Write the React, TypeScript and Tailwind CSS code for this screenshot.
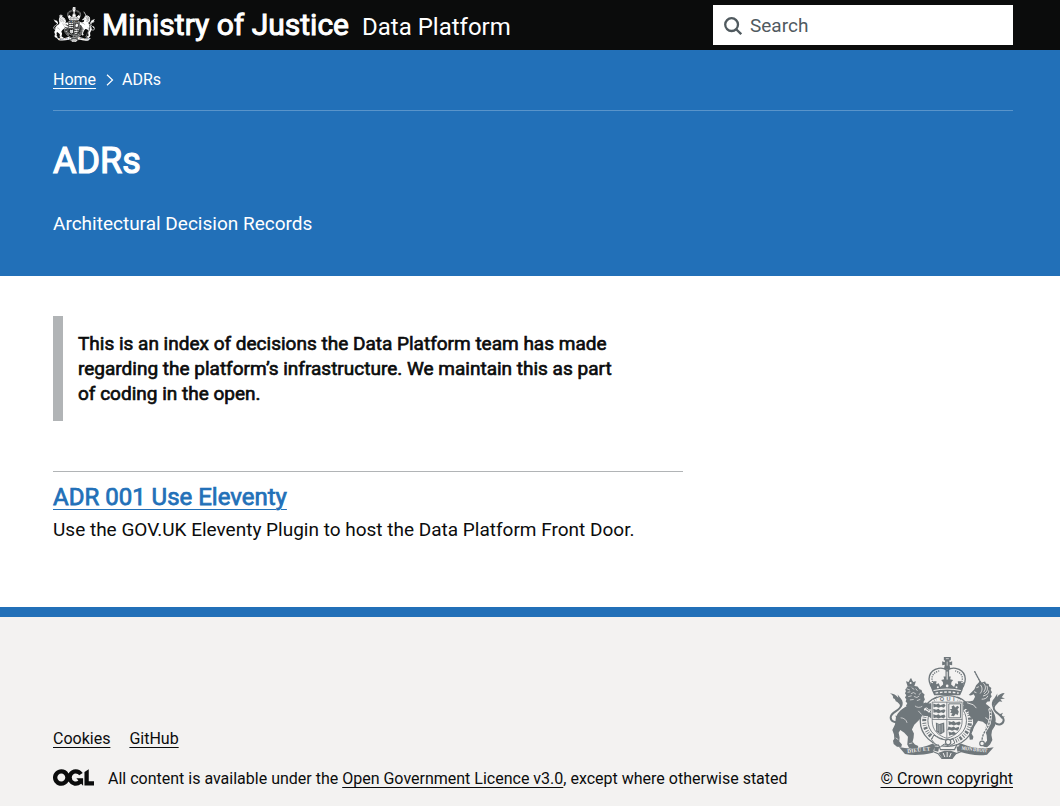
import React from "react";

type CrestProps = { className: string; ink: string; ground: string };

function Lion({ ink, ground }: { ink: string; ground: string }) {
  return (
    <g strokeLinecap="round" strokeLinejoin="round">
      {/* tail */}
      <path fill="none" stroke={ink} strokeWidth="6" d="M60 214c-14 6-28 0-28-12 0-18 30-20 31-36 1-9-12-12-16-21" />
      <path fill={ink} d="M30 129c10 1 19 5 25 14l-2-10 9 11c8 9 8 18 3 27-4-11-10-17-18-18 1-5-3-8-8-9 2-5-1-10-9-15zM46 196l12 5-8 6z" />
      {/* crown */}
      <path fill={ink} d="M83 108l-5-15 8 2 3-6 2-4h4l1 4 4 6 8-2-5 15z" />
      <circle cx="92" cy="98" r="3" fill={ground} />
      {/* mane and head */}
      <path fill={ink} d="M83 108l21-1 9 2 6 8 6 2 2 8 7 6-2 7 3 8-4 7 1 8-8 8-12 8-25-3-9-9 4-8-5-5 2-7-4-5 4-7-4-6 3-6-2-5z" />
      {/* body, arms and hind legs */}
      <path fill={ink} d="M88 155c13-5 29-2 39 7l9-5 14 3 9 8-3 9-9 1-6-6-11 2 5 10 14 4 13-1 8 8-3 8-13 2-8-7-19-2-8 12-16 16-7 14 6 12-1 13-3 12 7 8 10 5-2 9-12 1-14-5-5-10 2-23-11-12-12-8-5 8 3 14-1 12 8 9-2 8-13-1-10-8-2-10 4-6-1-13-5-13 8-17 2-15c1-16 16-31 36-41z" />
      <path fill="none" stroke={ground} strokeWidth="2" d="M81 116l8 3M96 113l6 4M108 116l4 5M84 126l6-1M94 130l7-3 6 4M86 139l8-2M103 139l8 3 6-4M91 149l9-1M112 151l8-3M122 128l-4 5M106 168c6 5 14 5 20 1M116 183l8 9M63 203c9 0 16 6 18 14M48 264l6 4M88 281l8-2" />
    </g>
  );
}

function Unicorn({ ink, ground }: { ink: string; ground: string }) {
  return (
    <g strokeLinecap="round" strokeLinejoin="round">
      {/* horn */}
      <path stroke={ink} strokeWidth="4" strokeDasharray="4 4" d="M285 64l17 32" />
      <path stroke={ink} strokeWidth="2" d="M285 64l17 32" />
      {/* tail */}
      <path fill="none" stroke={ink} strokeWidth="6" d="M345 218c12 10 26 4 27-7 1-17-30-20-30-38 0-10 9-14 17-23" />
      <path fill={ink} d="M375 128c-10 0-19 5-23 13l1-11-9 14c-8 8-10 18-5 28 3-10 9-16 17-19l12 2-6-8 14-2-10-4zM356 194l14-6-6 11 12 0-10 7z" />
      {/* head and mane */}
      <path fill={ink} d="M276 125l8-8 5-12 8-8 4-6 5 6 10-3 3 6 8 1 1 7 7 5-2 6 4 7-4 5 3 8-5 6 0 8-9 2-5 8-15 3-20-4-3-9 7-13-4-8-9 4-6-2z" />
      {/* body and legs */}
      <path fill={ink} d="M271 153c16-5 37-1 50 10 16 12 27 29 27 46l-2 18-9 14-2 14 3 15-7 13-9 9-11-2 3-9 8-9-1-16-5-17 4-15-11-9-14-3-6 9-9 14-5 15 6 10-2 8-9 1-2-13 4-21 9-15-2-12-12-14-1-14-9-4-11 9 5 9-6 7-8-12 1-11 14-12-15-3-5 5-7-4 6-9 18-1z" />
      <path fill="none" stroke={ground} strokeWidth="2.5" d="M291 112l5-2M303 105c6 8 5 16-1 24M312 100c8 8 6 18 0 25M322 108c4 10-1 17-8 22M327 122c1 9-8 13-16 15M324 138c-3 7-10 9-17 9M284 125l5 2M263 158l18 6 8 9M318 203c8 3 13 11 14 19" />
      {/* chain */}
      <path fill="none" stroke={ground} strokeWidth="8" d="M330 178c7 18 1 34-5 50-5 12-17 22-18 42" />
      <path fill="none" stroke={ink} strokeWidth="4" strokeLinecap="butt" strokeDasharray="7 3" d="M330 178c7 18 1 34-5 50-5 12-17 22-18 42" />
      <circle cx="307" cy="280" r="7" fill={ground} stroke={ink} strokeWidth="3.5" />
    </g>
  );
}

function Crest({ className, ink, ground }: CrestProps) {
  return (
    <svg viewBox="27 20 349 307" className={className} aria-hidden="true" preserveAspectRatio="none">
      {/* garter */}
      <ellipse cx="202" cy="212" rx="81" ry="77" fill={ground} stroke={ink} strokeWidth="4" />
      <ellipse cx="202" cy="212" rx="69" ry="65" fill="none" stroke={ink} strokeWidth="12" strokeDasharray="3 5 7 4 2 4" />
      <path fill={ground} d="M171 133h62v26h-62z" />
      <path fill="none" stroke={ink} strokeWidth="4" d="M160 147c26-14 58-14 84 0" />
      <ellipse cx="202" cy="212" rx="58" ry="56" fill={ground} stroke={ink} strokeWidth="3" />
      <text x="180" y="153" fill={ink} fontSize="17" fontWeight="700" fontFamily="Liberation Sans, sans-serif" textLength="44">QUI</text>
      <Lion ink={ink} ground={ground} />
      <Unicorn ink={ink} ground={ground} />
      {/* crown */}
      <path fill={ink} d="M192 20h21v10h-4v6l8-3v12l-8-2 3 14h-20l3-14-8 2V33l8 3v-6h-3z" />
      <path stroke={ground} strokeWidth="2" d="M198 25h9M202 34v12" />
      <path fill="none" stroke={ink} strokeWidth="4" d="M158 116c-19-29-11-56 18-62 10-2 18 0 26 6 8-6 16-8 26-6 29 6 37 33 18 62" />
      <path fill="none" stroke={ink} strokeWidth="4" strokeDasharray="4 3" d="M165 108c-16-22-9-41 13-46M239 108c16-22 9-41-13-46" />
      <path fill={ink} d="M197 58h11v36h-11zM156 120l-5-25 8 5 1-7h10l-1 9 8-3 4 11 9-7-1-8-5-6 9-2-2-8h22l-2 8 9 2-5 6-1 8 9 7 4-11 8 3-1-9h10l1 7 8-5-5 25-7 15h-78z" />
      <path stroke={ground} strokeWidth="3" fill="none" d="M161 121c26-6 55-6 82 0M202 64v24" />
      <path stroke={ground} strokeWidth="4" strokeDasharray="8 5" fill="none" d="M167 129c24-5 47-5 70 0" />
      <g fill={ground}>
        <circle cx="174" cy="111" r="3" />
        <circle cx="202" cy="107" r="4" />
        <circle cx="230" cy="111" r="3" />
      </g>
      {/* shield */}
      <path fill={ground} d="M154 153h96v60c0 30-19 48-49 57-29-9-47-27-47-57z" />
      <path fill="none" stroke={ink} strokeWidth="2.5" d="M157 156h90v56c0 28-17 44-46 53-27-9-44-25-44-53zM157 208h90M201 156v108" />
      <g fill={ink}>
        <path d="M160 160l9 3 7-3 5 5 12-4 4 5-5 7-8-3-8 3-7-3-8 2zM160 176l9 3 7-3 5 5 12-4 4 5-5 7-8-3-8 3-7-3-8 2zM160 192l9 3 7-3 5 5 12-4 4 5-5 7-8-3-8 3-7-3-8 2z" />
        <path d="M206 213l9 3 7-3 5 5 12-4 4 5-5 7-8-3-8 3-7-3-8 2zM206 229l9 3 7-3 5 5 10-4 1 5-5 7-8-3-8 3-7-3-8 2zM206 244l9 3 7-3 5 5 5-2-8 8-8-1-8 3z" />
        <path d="M168 217l10 5 15-5 1 29-12 7-13-9z" />
        <path d="M215 169l7-4 4 7 7-5 5 4-5 6 4 8-4 10-5-4-6 7-9-2 5-6-7-2 4-6-6-4 8-2z" />
      </g>
      <path fill="none" stroke={ink} strokeWidth="3" d="M207 161h35v42h-35z" />
      <path fill="none" stroke={ground} strokeWidth="1.5" d="M174 221v22M180 224v25M187 222v25" />
      {/* belt and motto scroll */}
      <path fill={ground} stroke={ink} strokeWidth="3" d="M162 255l18 11 22 5 18-4 5 12-17 9-15-6-12 9-16-10-10-12z" />
      <circle cx="205" cy="276" r="8" fill={ground} stroke={ink} strokeWidth="3.5" />
      <path fill={ground} stroke={ink} strokeWidth="3.5" d="M160 285h16l6 14h42l7-15h15v20l-18 7-11 14h-31l-11-14-20-8z" />
      <path fill={ink} d="M57 291c35 8 67 4 102-11l6 8-6 20c-30 7-58 9-84 4zM243 280c32 13 64 19 99 12l-20 22c-28 4-54 0-80-8l-8-14zM164 289l14 2-3 14-12-3zM230 290l13-2 3 14-13 3zM176 308l18-6h19l17 6-12 17h-30z" />
      <path fill="none" stroke={ground} strokeWidth="3" d="M190 309l5 12M202 306v15M214 309l-5 12" />
      <text x="83" y="309" transform="rotate(-7 83 309)" fill={ground} fontSize="16" fontWeight="700" fontFamily="Liberation Serif, serif" textLength="69">DIEU ET</text>
      <text x="245" y="299" transform="rotate(6 245 299)" fill={ground} fontSize="16" fontWeight="700" fontFamily="Liberation Serif, serif" textLength="78" lengthAdjust="spacingAndGlyphs">MON DROIT</text>
    </svg>
  );
}

function Header() {
  return (
    <header className="h-[50px] bg-[#0b0c0c] text-white">
      <div className="mx-auto flex h-full w-[960px] translate-x-[3px] items-center">
        <Crest className="mb-[2px] h-[35px] w-[42px] shrink-0" ink="#ffffff" ground="#0b0c0c" />
        <span className="ml-[7px] text-[30px] leading-[50px] whitespace-nowrap [-webkit-text-stroke:1px_currentColor]">Ministry of Justice</span>
        <span className="mt-[3px] ml-[13px] text-2xl whitespace-nowrap">Data Platform</span>
        <label className="ml-auto flex h-10 w-[300px] items-center bg-white pl-[11px] text-[#505a5f]">
          <svg viewBox="0 0 18 18" className="mt-px h-[18px] w-[18px]" fill="none" stroke="currentColor" strokeWidth="2.3">
            <circle cx="7.6" cy="7.6" r="6.4" />
            <path d="M12.2 12.2l5 5" />
          </svg>
          <input aria-label="Search" placeholder="Search" className="mt-[2px] ml-2 w-60 bg-transparent text-[19px] outline-none placeholder:text-[#505a5f]" />
        </label>
      </div>
    </header>
  );
}

const link = "underline decoration-1 underline-offset-[3px]";

export default function App() {
  return (
    <div className="min-h-[806px] overflow-hidden bg-white font-['Roboto',sans-serif] text-[#0b0c0c]">
      <Header />
      <section className="h-[226px] bg-[#2270b8] text-white">
        <div className="mx-auto w-[960px] translate-x-[3px]">
          <nav className="flex h-[61px] items-center border-b border-white/25 text-base leading-5">
            <a className={link}>Home</a>
            <svg viewBox="0 0 8 12" className="mr-[8px] ml-[10px] h-3 w-2" fill="none" stroke="currentColor" strokeWidth="1.2">
              <path d="M1 .8L6.5 6 1 11.2" />
            </svg>
            <span>ADRs</span>
          </nav>
          <h1 className="pt-[30px] text-[36px] leading-10 [-webkit-text-stroke:1.2px_currentColor]">ADRs</h1>
          <p className="pt-[30px] text-[19px] leading-[25px]">Architectural Decision Records</p>
        </div>
      </section>
      <main className="mx-auto h-[331px] w-[960px] translate-x-[3px] pt-10">
        <div className="h-[105px] w-[630px] border-l-10 border-[#b1b4b6] py-[15px] pl-[15px] text-[19px] leading-[25px] whitespace-nowrap [-webkit-text-stroke:0.65px_currentColor]">
          This is an index of decisions the Data Platform team has made
          <br />regarding the platform’s infrastructure. We maintain this as part
          <br />of coding in the open.
        </div>
        <div className="mt-[50px] w-[630px] border-t border-[#b1b4b6] pt-[10px]">
          <h2 className="text-2xl leading-[30px] text-[#2270b8] [-webkit-text-stroke:0.75px_currentColor]">
            <a className="underline decoration-1 underline-offset-4">ADR 001 Use Eleventy</a>
          </h2>
          <p className="pt-[5px] text-[19px] leading-[25px]">Use the GOV.UK Eleventy Plugin to host the Data Platform Front Door.</p>
        </div>
      </main>
      <footer className="h-[199px] border-t-10 border-[#2270b8] bg-[#f3f2f1] text-base leading-5">
        <div className="mx-auto flex w-[960px] translate-x-[3px] items-end justify-between pt-10">
          <div>
            <div className="flex gap-[19px]">
              <a className={link}>Cookies</a>
              <a className={link}>GitHub</a>
            </div>
            <div className="mt-5 flex items-center">
              <svg viewBox="0 0 483.2 195.7" className="mr-[14px] mb-[3px] h-[17px] w-[41px]" fill="currentColor">
                <path d="M421.5 142.8V.1l-50.7 32.3v161.1h112.4v-50.7zm-122.3-9.6A47.12 47.12 0 0 1 221 97.8c0-26 21.1-47.1 47.1-47.1 16.7 0 31.4 8.7 39.7 21.8l42.7-27.2A97.63 97.63 0 0 0 268.1 0c-36.5 0-68.3 20.1-85.1 49.7A98 98 0 0 0 97.8 0C43.9 0 0 43.9 0 97.8s43.9 97.8 97.8 97.8c36.5 0 68.3-20.1 85.1-49.7a97.76 97.76 0 0 0 149.6 25.4l19.4 22.2h3v-87.8h-80l24.3 27.5zM97.8 145c-26 0-47.1-21.1-47.1-47.1s21.1-47.1 47.1-47.1 47.1 21.1 47.1 47.1S123.8 145 97.8 145" />
              </svg>
              <span>All content is available under the <a className={link}>Open Government Licence v3.0</a>, except where otherwise stated</span>
            </div>
          </div>
          <div className="flex flex-col items-center">
            <Crest className="h-[102px] w-[116px]" ink="#6f777b" ground="#f3f2f1" />
            <a className={`mt-[10px] ${link}`}>© Crown copyright</a>
          </div>
        </div>
      </footer>
    </div>
  );
}
